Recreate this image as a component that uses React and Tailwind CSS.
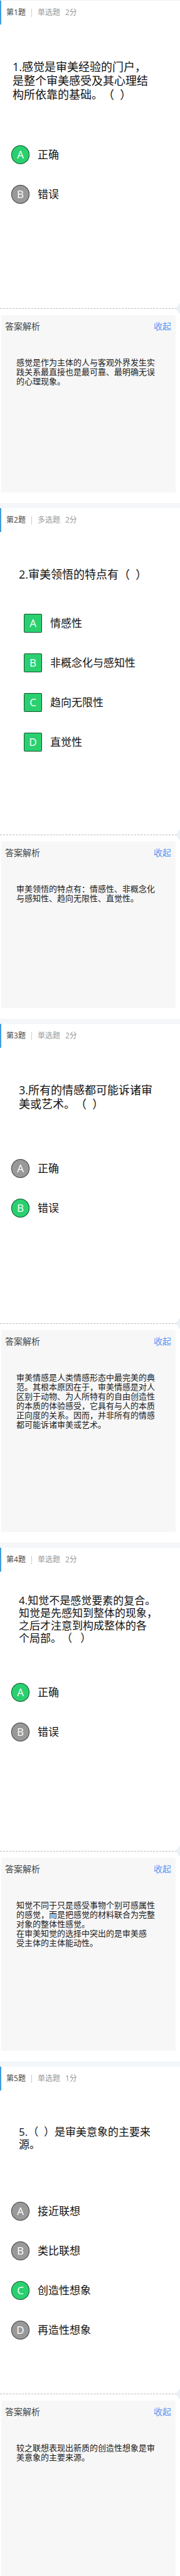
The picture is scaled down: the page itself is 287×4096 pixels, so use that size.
import { useState } from "react";

const questions = [
  {
    id: 1,
    kind: "单选题",
    points: 2,
    stem: "1.感觉是审美经验的门户，\n是整个审美感受及其心理结\n构所依靠的基础。（\u00a0\u00a0）",
    stemClass: "mt-14 pl-5 text-[18px] leading-[22px]",
    optionsClass: "mt-[70px] mb-[166px] pl-[18px]",
    options: ["正确", "错误"],
    correct: ["A"],
    explanation:
      "感觉是作为主体的人与客观外界发生实\n践关系最直接也是最可靠、最明确无误\n的心理现象。",
    panelClass: "min-h-[282px]",
  },
  {
    id: 2,
    kind: "多选题",
    multiple: true,
    points: 2,
    stem: "2.审美领悟的特点有（\u00a0\u00a0）",
    stemClass: "mt-14 pl-[30px] text-[18px] leading-[22px]",
    optionsClass: "mt-[52px] mb-[132px] pl-[38px]",
    options: ["情感性", "非概念化与感知性", "趋向无限性", "直觉性"],
    correct: ["A", "B", "C", "D"],
    explanation:
      "审美领悟的特点有：情感性、非概念化\n与感知性、趋向无限性、直觉性。",
    panelClass: "min-h-[265px]",
  },
  {
    id: 3,
    kind: "单选题",
    points: 2,
    stem: "3.所有的情感都可能诉诸审\n美或艺术。（\u00a0\u00a0）",
    stemClass: "mt-14 pl-[30px] text-[18px] leading-[22px]",
    optionsClass: "mt-[77px] mb-[168px] pl-[18px]",
    options: ["正确", "错误"],
    correct: ["B"],
    explanation:
      "审美情感是人类情感形态中最完美的典\n范。其根本原因在于，审美情感是对人\n区别于动物、为人所特有的自由创造性\n的本质的体验感受，它具有与人的本质\n正向度的关系。因而，并非所有的情感\n都可能诉诸审美或艺术。",
    panelClass: "min-h-[321px]",
  },
  {
    id: 4,
    kind: "单选题",
    points: 2,
    stem: "4.知觉不是感觉要素的复合。\n知觉是先感知到整体的现象，\n之后才注意到构成整体的各\n个局部。（\u00a0\u00a0\u00a0）",
    stemClass: "mt-9 pl-[30px] text-[17px] leading-5",
    optionsClass: "mt-[61px] mb-[174px] pl-[18px]",
    options: ["正确", "错误"],
    correct: ["A"],
    explanation:
      "知觉不同于只是感受事物个别可感属性\n的感觉，而是把感觉的材料联合为完整\n对象的整体性感觉。\n在审美知觉的选择中突出的是审美感\n受主体的主体能动性。",
    panelClass: "min-h-[307px]",
  },
  {
    id: 5,
    kind: "单选题",
    points: 1,
    stem: "5.（\u00a0\u00a0）是审美意象的主要来\n源。",
    stemClass: "mt-14 pl-[30px] text-[17px] leading-5",
    optionsClass: "mt-[81px] mb-[86px] pl-[18px]",
    options: ["接近联想", "类比联想", "创造性想象", "再造性想象"],
    correct: ["C"],
    explanation: "较之联想表现出新质的创造性想象是审\n美意象的主要来源。",
    panelClass: "min-h-[279px]",
    last: true,
  },
];

function Option({ question, letter, text }) {
  const correct = question.correct.includes(letter);
  return (
    <label className="relative flex items-center gap-[13px] cursor-pointer">
      <input
        type={question.multiple ? "checkbox" : "radio"}
        name={`question-${question.id}`}
        defaultChecked={correct}
        className="sr-only"
      />
      <span
        className={`flex h-[30px] w-[29px] shrink-0 items-center justify-center border border-black/60 text-[17px] leading-5 font-medium text-white ${
          question.multiple ? "rounded-[2px]" : "rounded-full"
        } ${correct ? "bg-[#2ad06f]" : "bg-[#999999]"}`}
      >
        {letter}
      </span>
      <span className="text-[17px] leading-5 text-[#111111]">{text}</span>
    </label>
  );
}

function Analysis({ question }) {
  const [open, setOpen] = useState(true);
  return (
    <section className={`mt-[10px] mr-[7px] ml-[2px] bg-[#f7f7f7] ${question.panelClass}`}>
      <div className="flex h-9 items-center justify-between pr-[7px] pl-[6px] text-[14px] leading-5">
        <h3 className="text-[#444444]">答案解析</h3>
        <button type="button" className="cursor-pointer text-[#5596f5]" onClick={() => setOpen(!open)}>
          {open ? "收起" : "展开"}
        </button>
      </div>
      {open && (
        <p className="pt-8 pl-6 text-[13px] leading-[15px] whitespace-pre-line text-[#1a1a1a]">
          {question.explanation}
        </p>
      )}
    </section>
  );
}

function Question({ question }) {
  return (
    <article
      className={`overflow-hidden bg-white ${
        question.last ? "" : "border-b-8 border-[#f4f6f9] pb-[17px]"
      }`}
    >
      <header className="flex h-[38px] items-center border-l-2 border-[#419fdb] pl-2 text-[12px] leading-4">
        <h2 className="text-[#444444]">第{question.id}题</h2>
        <span className="mx-[9px] h-[13px] w-px bg-[#cccccc]" />
        <span className="text-[#999999]">{question.kind}</span>
        <span className="ml-2 text-[#999999]">{question.points}分</span>
      </header>
      <p className={`whitespace-pre-line text-[#111111] ${question.stemClass}`}>{question.stem}</p>
      <div className={`flex flex-col gap-[33px] ${question.optionsClass}`}>
        {question.options.map((text, i) => (
          <Option key={text} question={question} letter={"ABCD"[i]} text={text} />
        ))}
      </div>
      <div className="relative border-t border-dashed border-[#bbbbbb]">
        <span className="absolute -top-[10px] -right-[14px] size-[19px] rounded-full bg-[#edf1f5]" />
      </div>
      <Analysis question={question} />
    </article>
  );
}

export default function App() {
  return (
    <main className="border-t border-[#eeeeee] bg-white font-['Open_Sans','Noto_Sans_CJK_SC',sans-serif] [text-spacing-trim:space-all]">
      {questions.map((question) => (
        <Question key={question.id} question={question} />
      ))}
    </main>
  );
}
